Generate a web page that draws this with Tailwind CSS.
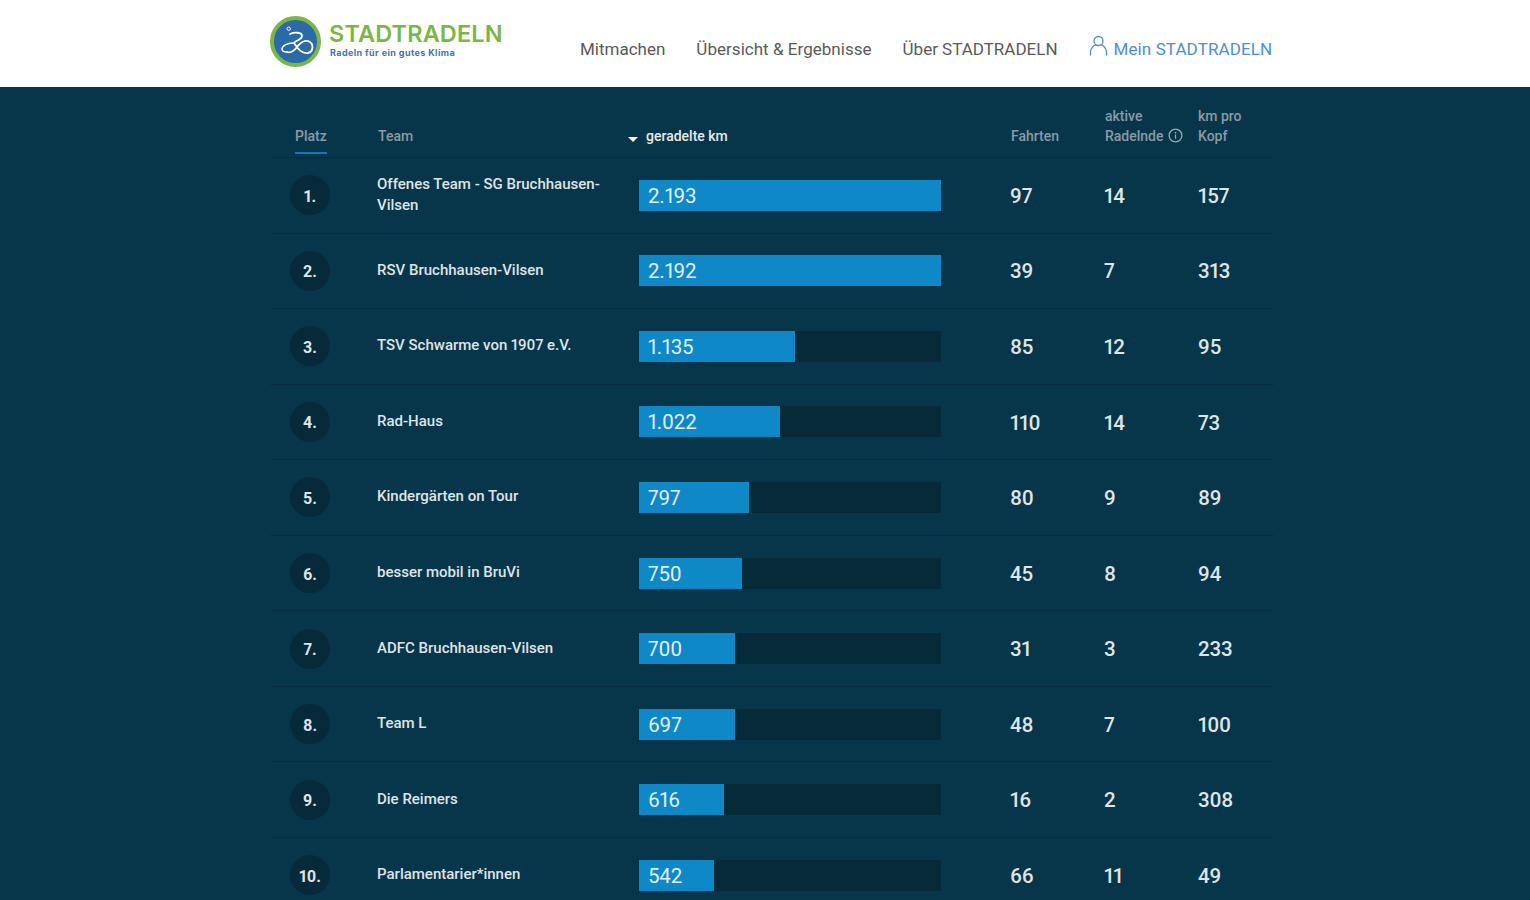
<!DOCTYPE html>
<html lang="de">
<head>
    <meta charset="UTF-8">
    <meta name="viewport" content="width=device-width, initial-scale=1.0">
    <title>STADTRADELN</title>
    <script src="https://cdn.jsdelivr.net/npm/@tailwindcss/browser@4"></script>
</head>
<body class="bg-[#07364a] font-[Roboto,sans-serif] proportional-nums overflow-hidden h-[900px]">
    <!-- Header -->
    <header class="bg-white h-[87px]">
        <div class="w-[1004px] ml-[270px] flex relative h-full">
            <a class="flex items-start pt-[16px] w-[310px] shrink-0">
                <svg class="w-[51px] h-[51px] shrink-0" viewBox="0 0 51 51" fill="none">
                    <circle cx="25.5" cy="25.5" r="23.5" fill="#2a6aa6" stroke="#7ab648" stroke-width="4"/>
                    <circle cx="18.700" cy="12.700" r="1.700" stroke="#fff" stroke-width="1"/>
                    <path d="M20 18C24 16 32 16 32 20C32 24 26 24 24 27C28 33 32 38 38 37C43 36 44 29 40 26C35 23 30 27 27 31C24 35 20 37 17 36" stroke="#fff" stroke-width="1.800" stroke-linecap="round"/>
                    <path d="M23 27C17 27 12 30 12 33C12 35 14 36 17 36" stroke="#fff" stroke-width="1.400" stroke-linecap="round"/>
                </svg>
                <div class="ml-[8px] mt-[5px]">
                    <div class="font-[Inter,sans-serif] font-semibold text-[23.500px] leading-[26px] tracking-[0.12px] text-[#7ab648]">STADTRADELN</div>
                    <div class="font-[Inter,sans-serif] font-bold text-[9px] leading-[11px] ml-[1px] tracking-[0.4px] text-[#3f74ab]">Radeln für ein gutes Klima</div>
                </div>
            </a>
            <nav class="flex items-start pt-[39px] text-[17px] leading-[20px] text-[#5a5a5a]">
                <a>Mitmachen</a>
                <a class="ml-[31px] tracking-[0.03px]">Übersicht &amp; Ergebnisse</a>
                <a class="ml-[31px]">Über STADTRADELN</a>
                <a class="ml-[31px] flex text-[#4a90d2] whitespace-nowrap tracking-[0.1px]">
                    <svg class="w-[19px] h-[21px] -mt-[4px] mr-[6px]" viewBox="0 0 19 21" fill="none" stroke="#4a90d2" stroke-width="1.300">
                        <circle cx="9.500" cy="6" r="4.500"/>
                        <path d="M1.500 20v-3c0-3.500 3-6.500 5-6.800M17.500 20v-3c0-3.500-3-6.500-5-6.800" stroke-linecap="round"/>
                    </svg>
                    Mein STADTRADELN
                </a>
            </nav>
        </div>
    </header>

    <!-- Ranking table -->
    <main class="w-[1004px] ml-[270px]">
        <div class="grid grid-cols-[107px_262px_371px_94px_94px_76px] h-[71px] items-end border-b border-[#062c3d] text-[14px] leading-[20px] font-medium text-[#8a9ba5]">
            <div class="pl-[25px]"><span class="block w-[32px] pt-[1px] pb-[6px] mb-[3px] border-b-2 border-[#1a75bb]">Platz</span></div>
            <div class="pb-[11px] pl-[1px]">Team</div>
            <div class="pb-[11px] flex items-center text-[#e6eaec] -ml-[11px]">
                <span class="w-0 h-0 mt-[6px] mr-[8px] border-x-[5px] border-x-transparent border-t-[5px] border-t-white"></span>
                geradelte km
            </div>
            <div class="pb-[11px] pl-[1px]">Fahrten</div>
            <div class="pb-[11px] pl-[1px]">aktive<br>
                <span class="flex items-center">Radelnde
                    <svg class="w-[15px] h-[15px] ml-[4px] -mt-[1px]" viewBox="0 0 15 15" fill="none" stroke="#9aa9b2" stroke-width="1.300">
                        <circle cx="7.500" cy="7.500" r="6.400"/>
                        <path d="M7.500 6.500v4.300M7.500 4v1.400"/>
                    </svg>
                </span>
            </div>
            <div class="pb-[11px]">km pro<br>Kopf</div>
        </div>
        <div id="rows"></div>
    </main>

    <script>
        const teams = [
            ['1.', 'Offenes Team - SG Bruchhausen-Vilsen', '2.193', 2193, 97, 14, 157],
            ['2.', 'RSV Bruchhausen-Vilsen', '2.192', 2192, 39, 7, 313],
            ['3.', 'TSV Schwarme von 1907 e.V.', '1.135', 1135, 85, 12, 95],
            ['4.', 'Rad-Haus', '1.022', 1022, 110, 14, 73],
            ['5.', 'Kindergärten on Tour', '797', 797, 80, 9, 89],
            ['6.', 'besser mobil in BruVi', '750', 750, 45, 8, 94],
            ['7.', 'ADFC Bruchhausen-Vilsen', '700', 700, 31, 3, 233],
            ['8.', 'Team L', '697', 697, 48, 7, 100],
            ['9.', 'Die Reimers', '616', 616, 16, 2, 308],
            ['10.', 'Parlamentarier*innen', '542', 542, 66, 11, 49],
        ];

        document.getElementById('rows').innerHTML = teams.map(t => `
            <div class="grid grid-cols-[107px_262px_371px_94px_94px_76px] h-[75.55px] items-center border-b border-[#062c3d]">
                <div class="pl-[20px]">
                    <div class="w-[40px] h-[40px] rounded-full bg-[#062a3a] flex items-center justify-center pt-[3px] text-[16px] font-bold text-[#dfe4e7]">${t[0]}</div>
                </div>
                <div class="pr-[30px] -mt-[1px] text-[15px] leading-[21px] font-medium text-[#dfe4e7]">${t[1]}</div>
                <div class="w-[302px] h-[31px] bg-[#072a39]">
                    <div class="h-full bg-[#0f88c8] pl-[9px] pt-[1px] text-[20.500px] leading-[31px] tracking-[-0.15px] text-[#e3eff6] whitespace-nowrap" style="width: ${t[3] / 2193 * 100}%">${t[2]}</div>
                </div>
                <div class="pt-[2px] text-[20.500px] tracking-[-0.2px] font-medium text-[#dfe4e7]">${t[4]}</div>
                <div class="pt-[2px] text-[20.500px] tracking-[-0.2px] font-medium text-[#dfe4e7]">${t[5]}</div>
                <div class="pt-[2px] text-[20.500px] tracking-[-0.2px] font-medium text-[#dfe4e7]">${t[6]}</div>
            </div>`).join('');
    </script>
</body>
</html>
